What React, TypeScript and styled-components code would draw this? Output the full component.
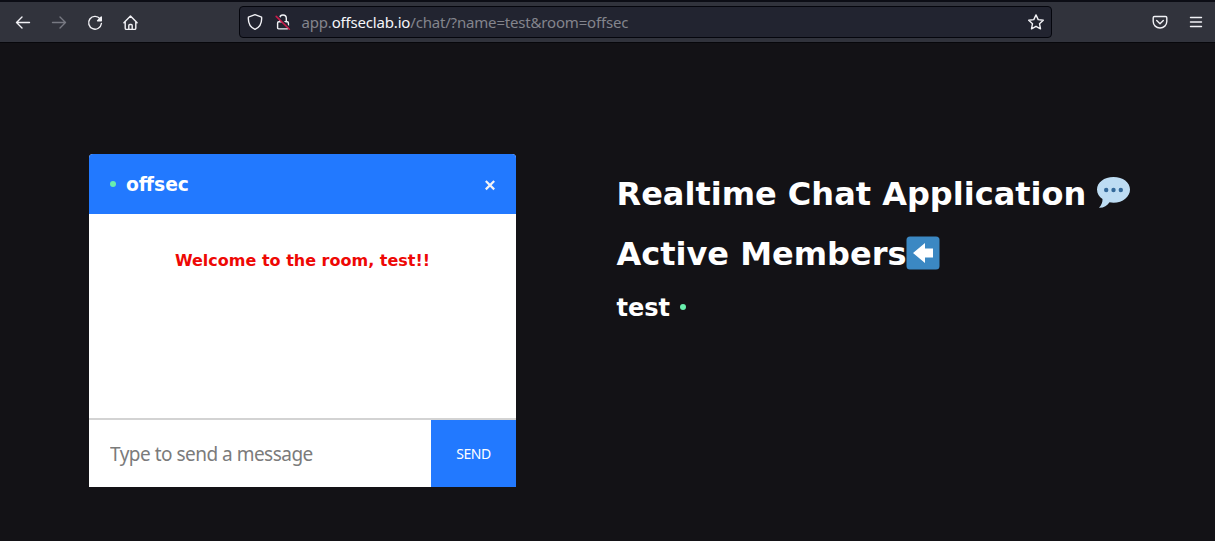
import React from "react";
import styled, { createGlobalStyle } from "styled-components";

const GlobalStyle = createGlobalStyle`
  * { box-sizing: border-box; }
  body {
    margin: 0;
    background: #131216;
    color: #fff;
    font-family: "DejaVu Sans", sans-serif;
  }
`;

const Window = styled.div`
  height: 541px;
  overflow: hidden;
  display: flex;
  flex-direction: column;
`;

const Toolbar = styled.header`
  flex: none;
  height: 43px;
  padding: 0 10px 0 14px;
  display: flex;
  align-items: center;
  background: #31333c;
  border-top: 2px solid #0c0d15;
  border-bottom: 1px solid #07070b;
`;

const NavButtons = styled.nav`
  width: 225px;
  display: flex;
  gap: 18px;
`;

const Icon = styled.svg<{ $dim?: boolean }>`
  display: block;
  flex: none;
  width: 18px;
  height: 18px;
  fill: none;
  stroke: ${(p) => (p.$dim ? "#777982" : "#f2f2f6")};
  stroke-width: 1.4;
  stroke-linecap: round;
  stroke-linejoin: round;
`;

const CloseIcon = styled(Icon)`
  stroke-width: 2.2;
  stroke-linecap: butt;
`;

const AddressBar = styled.div`
  width: 813px;
  height: 32px;
  padding: 0 6px;
  display: flex;
  align-items: center;
  gap: 10px;
  background: #222430;
  border: 1px solid #05060d;
  border-radius: 4px;
`;

const Url = styled.span`
  flex: 1;
  margin-left: -0.5px;
  font: 15px/20px "Noto Sans", sans-serif;
  letter-spacing: -0.18px;
  color: #84858d;
  white-space: nowrap;
`;

const Host = styled.span`
  color: #f6f6fa;
`;

const ToolbarEnd = styled.div`
  margin-left: auto;
  display: flex;
  gap: 18px;
`;

const Page = styled.main`
  display: flex;
  align-items: flex-start;
  padding: 111px 0 0 89px;
`;

const ChatBox = styled.section`
  width: 427px;
  height: 333px;
  display: flex;
  flex-direction: column;
  background: #fff;
  border-radius: 4px 4px 0 0;
  overflow: hidden;
`;

const ChatHeader = styled.div`
  height: 60px;
  flex: none;
  padding: 0 17px 0 21px;
  display: flex;
  align-items: center;
  background: #2279ff;
`;

const OnlineDot = styled.i`
  flex: none;
  width: 6px;
  height: 6px;
  border-radius: 50%;
  background: #69efad;
`;

const RoomName = styled.h3`
  margin: 0 auto 0 10px;
  padding-top: 2px;
  font-size: 18.72px;
  line-height: 24px;
`;

const Messages = styled.div`
  flex: 1;
  padding-top: 37px;
  text-align: center;
  color: #ee0805;
  font-size: 16px;
  font-weight: bold;
  line-height: 20px;
`;

const Composer = styled.form`
  flex: none;
  height: 69px;
  display: flex;
  border-top: 2px solid #d3d3d3;
`;

const MessageInput = styled.input`
  flex: 1;
  min-width: 0;
  padding: 1px 0 0 21px;
  border: 0;
  outline: 0;
  background: #fff;
  font: 19px "Noto Sans", sans-serif;
  letter-spacing: -0.51px;
  &::placeholder { color: #7b7b7b; opacity: 1; }
`;

const SendButton = styled.button`
  width: 85px;
  padding: 0;
  border: 0;
  background: #2279ff;
  color: #fff;
  font: 14px "Noto Sans", sans-serif;
  letter-spacing: -0.4px;
`;

const Info = styled.aside`
  margin: 17px 0 0 100.5px;
`;

const Title = styled.h1`
  margin: 0 0 14px;
  height: 46px;
  display: flex;
  align-items: center;
  font-size: 32px;
  line-height: 46px;
  white-space: nowrap;
`;

const Emoji = styled.svg`
  flex: none;
  width: 34px;
  height: 34px;
  margin: -2px 0 0 -1px;
`;

const Member = styled.h2`
  margin: 0;
  display: flex;
  align-items: center;
  gap: 10px;
  font-size: 24px;
  line-height: 32px;
`;

const MemberName = styled.span`
  padding-top: 1px;
  margin-bottom: -1px;
`;

export default function App() {
  return (
    <Window>
      <GlobalStyle />
      <Toolbar>
        <NavButtons>
          <Icon viewBox="0 0 18 18"><path d="M15.500 9.500h-13M8 4 2.500 9.500 8 15" /></Icon>
          <Icon viewBox="0 0 18 18" $dim><path d="M2.500 9.500h13M10 4 15.500 9.500 10 15" /></Icon>
          <Icon viewBox="0 0 18 18">
            <path d="M14 5.700A6.400 6.400 0 1 0 15.400 10.500" />
            <path d="M15.300 4v3.700h-3.700z" fill="#f2f2f6" />
          </Icon>
          <Icon viewBox="0 0 18 18">
            <path d="M1.900 9.700 8.500 3l6.600 6.700M3.200 8.700v6.500q0 1.200 1.200 1.200h8.200q1.200 0 1.200-1.200V8.700M6.800 16.200v-3.700q0-1 1-1h1.400q1 0 1 1v3.700" />
          </Icon>
        </NavButtons>
        <AddressBar>
          <Icon viewBox="0 0 18 18">
            <path d="M9 1.700 15.600 4.200C16 9.500 13.500 14.300 9 16.300 4.500 14.300 2 9.500 2.400 4.200z" />
          </Icon>
          <Icon viewBox="0 0 18 18">
            <path d="M5.700 8.800V5.300a3.300 3.300 0 0 1 6.600 0v3.500M4.700 8.800h8.600q1.100 0 1.100 1.100v4.900q0 1.100-1.100 1.100H4.700q-1.100 0-1.100-1.100V9.900q0-1.100 1.100-1.100z" />
            <path d="M3.300 3 15.800 15" stroke="#222430" strokeWidth="1.800" />
            <path d="M2.200 3.400 15.400 16.200" stroke="#c91c4b" strokeWidth="1.600" />
          </Icon>
          <Url>app.<Host>offseclab.io</Host>/chat/?name=test&amp;room=offsec</Url>
          <Icon viewBox="0 0 18 18">
            <path d="m9 1.900 2.200 4.700 5.100.6-3.800 3.500 1 5.100L9 13.300l-4.500 2.500 1-5.100L1.700 7.200l5.100-.6z" />
          </Icon>
        </AddressBar>
        <ToolbarEnd>
          <Icon viewBox="0 0 18 18">
            <path d="M3.500 3.500h11q1.300 0 1.300 1.300v3.800A6.800 6.400 0 0 1 2.200 8.600V4.800q0-1.300 1.300-1.300zM5.700 7.500 9 10.700l3.300-3.200" />
          </Icon>
          <Icon viewBox="0 0 18 18"><path d="M3.500 4.500h11M3.500 9h11M3.500 13.500h11" /></Icon>
        </ToolbarEnd>
      </Toolbar>
      <Page>
        <ChatBox>
          <ChatHeader>
            <OnlineDot />
            <RoomName>offsec</RoomName>
            <CloseIcon viewBox="0 0 18 18"><path d="m4.800 6 8.400 8.400M13.200 6l-8.400 8.400" /></CloseIcon>
          </ChatHeader>
          <Messages>Welcome to the room, test!!</Messages>
          <Composer>
            <MessageInput placeholder="Type to send a message" />
            <SendButton type="button">SEND</SendButton>
          </Composer>
        </ChatBox>
        <Info>
          <Title>
            Realtime Chat Application&nbsp;
            <Emoji viewBox="-.5 0 34 34">
              <path d="M17 1C7.500 1 .5 6.500.5 13.500c0 4.300 2.200 7.400 5.500 9.500.2 3-1 6-3.500 8.800 4.600.2 8.300-2 10.500-5.500 1.300.3 2.600.4 4 .4 9.500 0 16.500-6 16.500-13.200S26.500 1 17 1z" fill="#bddcf3" />
              <g fill="#34699a"><circle cx="9.700" cy="14" r="2.200" /><circle cx="17" cy="14" r="2.200" /><circle cx="24.300" cy="14" r="2.200" /></g>
            </Emoji>
          </Title>
          <Title>
            Active Members
            <Emoji viewBox="0 0 34 34">
              <rect x=".5" y=".5" width="33" height="33" rx="3.500" fill="#3b88c3" />
              <path d="M7 17 19 7v5.500h8v9h-8V27z" fill="#fff" />
            </Emoji>
          </Title>
          <Member><MemberName>test</MemberName><OnlineDot /></Member>
        </Info>
      </Page>
    </Window>
  );
}
